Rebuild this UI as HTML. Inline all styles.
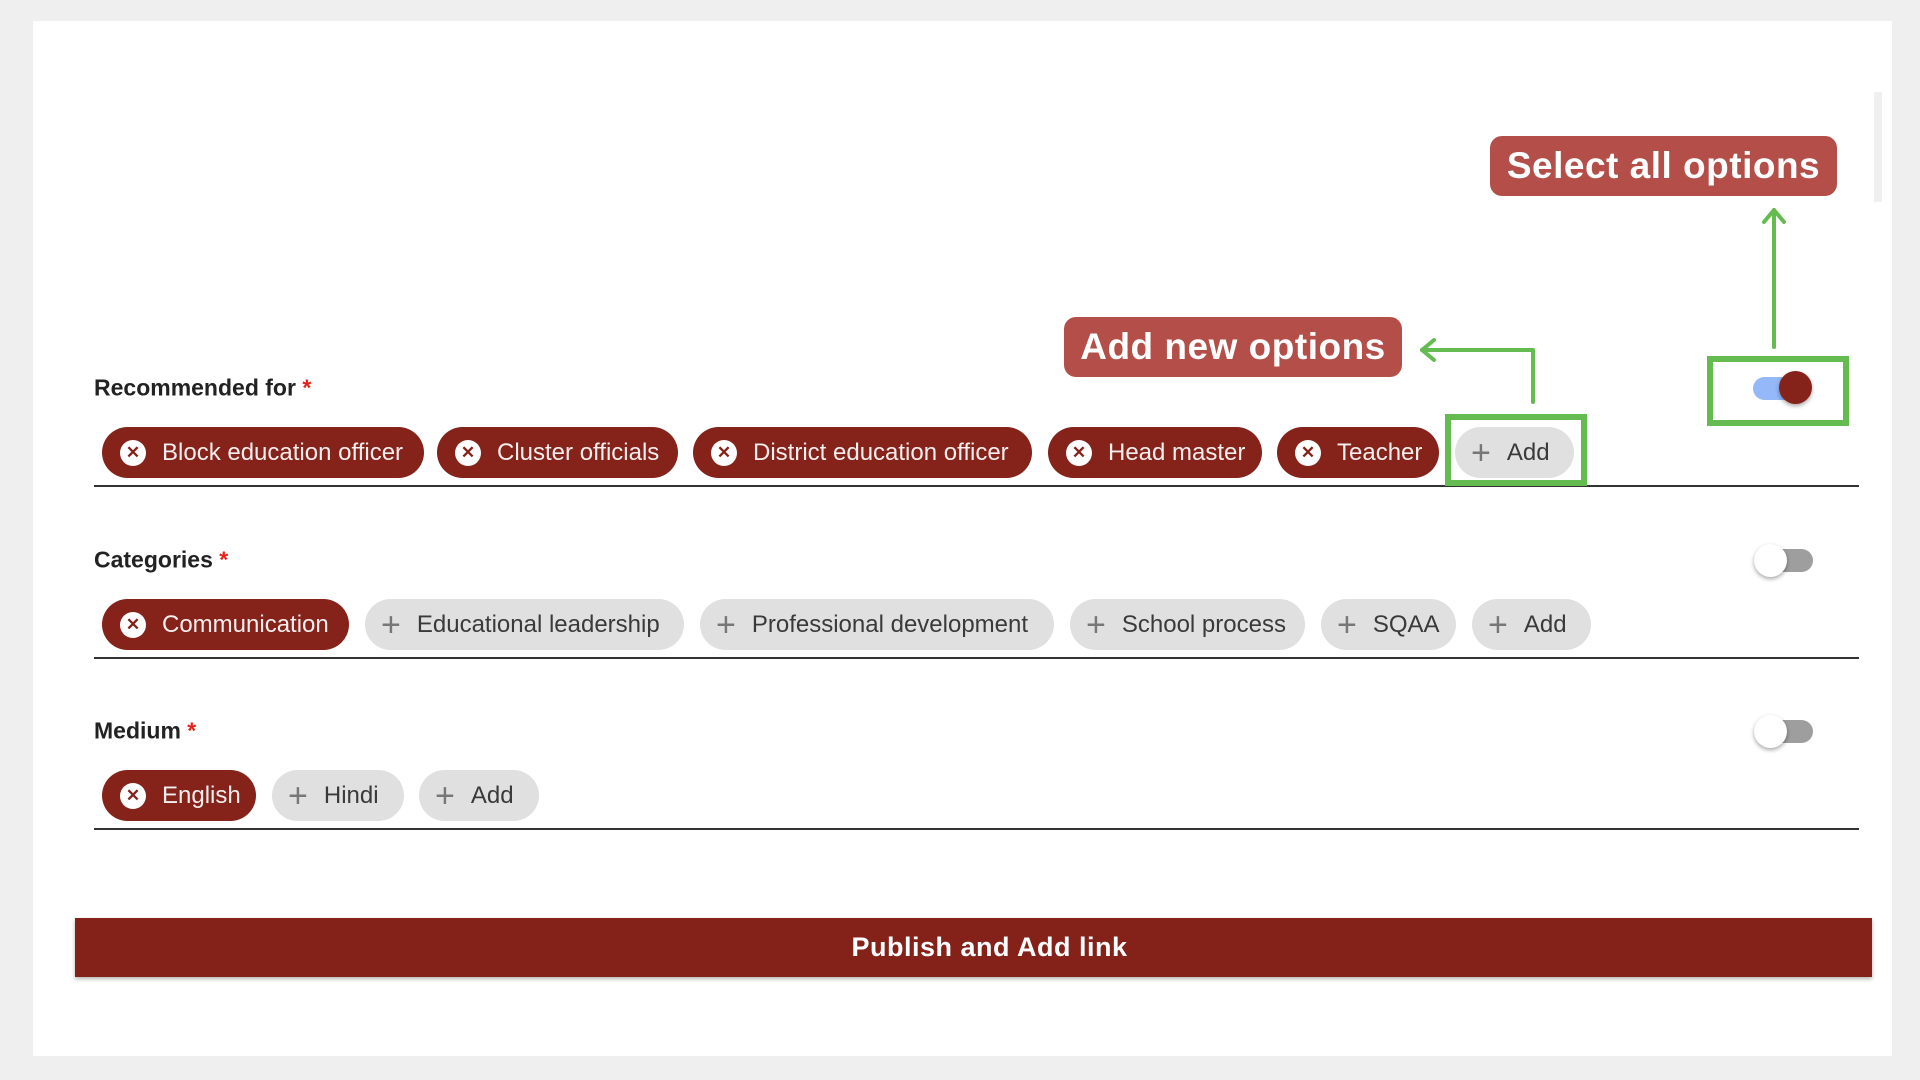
<!DOCTYPE html>
<html><head><meta charset="utf-8"><style>
*{margin:0;padding:0;box-sizing:border-box}
body{width:1920px;height:1080px;background:#efefef;position:relative;overflow:hidden;font-family:"Liberation Sans",sans-serif}
.panel{position:absolute;left:33px;top:21px;width:1859px;height:1035px;background:#fff}
.a{position:absolute}
.lbl{position:absolute;left:94px;font-size:23px;font-weight:bold;color:#222;transform:translateY(-50%)}
.lbl b{color:#e8201a}
.chip{position:absolute;height:51px;border-radius:26px;display:flex;align-items:center;font-size:24px;white-space:nowrap}
.r{background:#85221a;color:#f4eeee;padding-left:18px}
.g{background:#e0e0e0;color:#3a3a3a;padding-left:16px}
.x{width:26px;height:26px;border-radius:50%;background:#fff;color:#85221a;font-size:17px;display:flex;align-items:center;justify-content:center;margin-right:16px;font-weight:bold}
.p{font-size:34px;color:#777;margin-right:16px;font-weight:300;line-height:1}
.line{position:absolute;left:94px;width:1765px;height:2px;background:#333}
.tip{position:absolute;background:#b34e48;color:#fff;border-radius:12px;display:flex;align-items:center;justify-content:center;font-size:37px;font-weight:bold;letter-spacing:.5px}
.gb{position:absolute;border:6px solid #64bb50}
.trk{position:absolute;width:58px;height:23px;border-radius:12px}
.knob{position:absolute;width:33px;height:33px;border-radius:50%;box-shadow:0 2px 4px rgba(0,0,0,.35)}
</style></head><body>
<div class="panel"></div>
<div class="a" style="left:1874px;top:92px;width:8px;height:110px;background:#f0f0f0"></div>

<div class="tip" style="left:1490px;top:136px;width:347px;height:60px">Select all options</div>
<div class="tip" style="left:1064px;top:317px;width:338px;height:60px">Add new options</div>

<svg class="a" style="left:0;top:0" width="1920" height="1080">
<g stroke="#64bb50" stroke-width="4" fill="none" stroke-linecap="round" stroke-linejoin="round">
<path d="M1533 402 V350 H1422"/><path d="M1434 340 L1422 350 L1434 360"/>
<path d="M1774 347 V210"/><path d="M1764 222 L1774 210 L1784 222"/>
</g></svg>

<div class="lbl" style="top:388px">Recommended for <b>*</b></div>
<div class="chip r" style="left:102px;top:427px;width:322px"><span class="x">✕</span>Block education officer</div>
<div class="chip r" style="left:437px;top:427px;width:241px"><span class="x">✕</span>Cluster officials</div>
<div class="chip r" style="left:693px;top:427px;width:339px"><span class="x">✕</span>District education officer</div>
<div class="chip r" style="left:1048px;top:427px;width:214px"><span class="x">✕</span>Head master</div>
<div class="chip r" style="left:1277px;top:427px;width:162px"><span class="x">✕</span>Teacher</div>
<div class="chip g" style="left:1455px;top:427px;width:119px"><span class="p">+</span>Add</div>
<div class="line" style="top:485px"></div>
<div class="gb" style="left:1445px;top:414px;width:142px;height:72px"></div>
<div class="gb" style="left:1707px;top:356px;width:142px;height:70px"></div>
<div class="trk" style="left:1753px;top:377px;background:#94b8f8"></div>
<div class="knob" style="left:1779px;top:371px;background:#85221a"></div>

<div class="lbl" style="top:560px">Categories <b>*</b></div>
<div class="chip r" style="left:102px;top:599px;width:247px"><span class="x">✕</span>Communication</div>
<div class="chip g" style="left:365px;top:599px;width:319px"><span class="p">+</span>Educational leadership</div>
<div class="chip g" style="left:700px;top:599px;width:354px"><span class="p">+</span>Professional development</div>
<div class="chip g" style="left:1070px;top:599px;width:235px"><span class="p">+</span>School process</div>
<div class="chip g" style="left:1321px;top:599px;width:135px"><span class="p">+</span>SQAA</div>
<div class="chip g" style="left:1472px;top:599px;width:119px"><span class="p">+</span>Add</div>
<div class="line" style="top:657px"></div>
<div class="trk" style="left:1755px;top:549px;background:#9e9e9e"></div>
<div class="knob" style="left:1754px;top:544px;background:#fff"></div>

<div class="lbl" style="top:731px">Medium <b>*</b></div>
<div class="chip r" style="left:102px;top:770px;width:154px"><span class="x">✕</span>English</div>
<div class="chip g" style="left:272px;top:770px;width:132px"><span class="p">+</span>Hindi</div>
<div class="chip g" style="left:419px;top:770px;width:120px"><span class="p">+</span>Add</div>
<div class="line" style="top:828px"></div>
<div class="trk" style="left:1755px;top:720px;background:#9e9e9e"></div>
<div class="knob" style="left:1754px;top:715px;background:#fff"></div>

<div class="a" style="left:75px;top:918px;width:1797px;height:59px;background:#842118;color:#fff;font-size:27px;font-weight:bold;display:flex;align-items:center;justify-content:center;padding-left:32px;box-shadow:0 2px 4px rgba(0,0,0,.3);letter-spacing:.5px">Publish and Add link</div>
</body></html>
